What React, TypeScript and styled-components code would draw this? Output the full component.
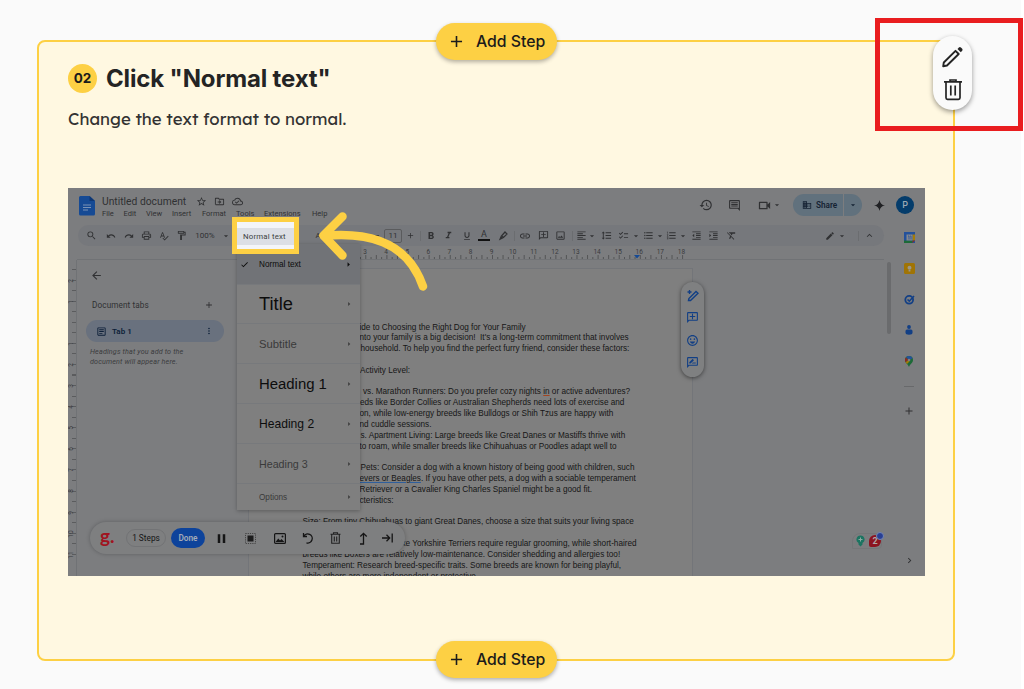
import { ReactNode } from 'react';
import styled, { createGlobalStyle } from 'styled-components';
import {
  MdAdd,
  MdArrowBack,
  MdArrowDropDown,
  MdArrowRight,
  MdCheck,
  MdChecklist,
  MdChevronRight,
  MdDomain,
  MdEdit,
  MdExpandLess,
  MdFormatAlignLeft,
  MdFormatBold,
  MdFormatClear,
  MdFormatIndentDecrease,
  MdFormatIndentIncrease,
  MdFormatItalic,
  MdFormatLineSpacing,
  MdFormatListBulleted,
  MdFormatListNumbered,
  MdFormatUnderlined,
  MdHistory,
  MdLink,
  MdMoreVert,
  MdOutlineAddComment,
  MdOutlineArticle,
  MdOutlineCloudDone,
  MdOutlineComment,
  MdOutlineDriveFileMove,
  MdOutlineEmojiEmotions,
  MdOutlineFormatPaint,
  MdOutlineImage,
  MdOutlinePrint,
  MdOutlineRateReview,
  MdOutlineVideocam,
  MdPause,
  MdPerson,
  MdRedo,
  MdRemove,
  MdSearch,
  MdSpellcheck,
  MdStarBorder,
  MdUndo,
} from 'react-icons/md';

const yellow = '#fdd044';
const ink = '#303133';

const GlobalStyle = createGlobalStyle`
  * {
    box-sizing: border-box;
  }
  body {
    margin: 0;
    background: #fafafa;
    font-family: Inter, 'Liberation Sans', sans-serif;
  }
  svg {
    display: block;
    flex: none;
  }
`;

const Page = styled.main`
  position: relative;
  width: 1024px;
  height: 689px;
  padding: 40px 0 0 37px;
  overflow: hidden;
  background: linear-gradient(to right, #fafafa 1021px, #fff 1021px);
`;

const Card = styled.section`
  position: relative;
  width: 918px;
  height: 621px;
  padding: 20px 29px 0;
  border: 2px solid ${yellow};
  border-radius: 8px;
  background: #fff8e1;
`;

const AddStep = styled.button<{ $bottom?: boolean }>`
  position: absolute;
  left: 397px;
  ${({ $bottom }) => ($bottom ? 'bottom: -19px;' : 'top: -19px;')}
  display: flex;
  align-items: center;
  gap: 10px;
  width: 121px;
  height: 37px;
  padding: 0 0 1px 11px;
  border: 0;
  border-radius: 19px;
  background: ${yellow};
  box-shadow: 0 2px 4px rgba(0, 0, 0, 0.3);
  color: #1b1b1b;
  font: 500 15.8px Inter, sans-serif;
  white-space: nowrap;
`;

const StepHeader = styled.header`
  display: flex;
  align-items: center;
  gap: 9px;
  height: 32px;
`;

const StepNumber = styled.span`
  display: flex;
  align-items: center;
  justify-content: center;
  width: 29px;
  height: 29px;
  border-radius: 50%;
  background: ${yellow};
  color: #1b1b1b;
  font-size: 13.5px;
  font-weight: 700;
`;

const StepTitle = styled.h2`
  margin: 0;
  color: #242424;
  font-size: 24px;
  font-weight: 700;
  letter-spacing: -0.15px;
  white-space: nowrap;
`;

const StepText = styled.p`
  height: 24px;
  margin: 13px 0 57px;
  color: #333;
  font: 400 16.8px/24px Lexend, Lato, sans-serif;
  white-space: nowrap;
`;

const Shot = styled.div`
  position: relative;
  width: 857px;
  height: 388px;
  overflow: hidden;
  background: #7c7d7f;
  color: ${ink};
  font-family: Roboto, sans-serif;
  white-space: nowrap;
`;

const DocHeader = styled.div`
  display: flex;
  height: 37px;
  padding: 7px 11px 0 11px;
`;

const TitleBlock = styled.div`
  flex: 1;
  padding-left: 7px;
`;

const TitleRow = styled.div`
  display: flex;
  align-items: center;
  gap: 7px;
  height: 12px;
  font-size: 10.3px;

  span {
    width: 87px;
  }
`;

const MenuBar = styled.div`
  display: flex;
  height: 13px;
  font-size: 7.5px;
  line-height: 13px;
`;

const MenuName = styled.span<{ $w: number }>`
  width: ${({ $w }) => $w}px;
`;

const HeaderActions = styled.div`
  display: flex;
  align-items: center;
  height: 22px;
  margin-top: -1px;
`;

const Share = styled.div`
  display: flex;
  align-items: center;
  width: 69px;
  height: 22px;
  padding-left: 9px;
  border-radius: 11px;
  background: #61717d;
  color: #152233;
  font-size: 8.2px;
  font-weight: 600;
  gap: 4px;
`;

const ShareArrow = styled.span`
  display: flex;
  align-items: center;
  height: 22px;
  margin-left: auto;
  padding: 0 4px;
  border-left: 1px solid #7c7d7f;
`;

const Avatar = styled.span`
  display: flex;
  align-items: center;
  justify-content: center;
  width: 18px;
  height: 18px;
  border-radius: 50%;
  background: #043c6b;
  color: #9aa7b3;
  font-size: 9px;
  font-weight: 500;
`;

const Columns = styled.div`
  display: flex;
`;

const Main = styled.div`
  width: 816px;
`;

const Toolbar = styled.div`
  display: flex;
  align-items: center;
  height: 21px;
  margin-left: 10px;
  padding: 0 7px 0 3px;
  border-radius: 11px;
  background: #76787c;
`;

const Slot = styled.span<{ $w: number }>`
  display: flex;
  flex: none;
  align-items: center;
  justify-content: center;
  width: ${({ $w }) => $w}px;
  font-size: 8px;
`;

const Divider = styled.i`
  width: 1px;
  height: 10px;
  background: #6b6d70;
`;

const FontSize = styled.span`
  width: 18px;
  height: 14px;
  border: 1px solid #5a5b5d;
  border-radius: 2px;
  line-height: 12px;
  text-align: center;
`;

const TextColor = styled.span`
  width: 12px;
  border-bottom: 2px solid #111;
  font-size: 9px;
  line-height: 9px;
  text-align: center;
`;

const Spacer = styled.span`
  flex: 1;
`;

const Ruler = styled.div`
  display: flex;
  position: relative;
  height: 14px;
  margin-left: 9px;
  padding-left: 277.5px;
  border-bottom: 1px solid #707275;
  color: #3a3b3d;
  font-size: 6.5px;
  line-height: 13px;
`;

const RulerNumber = styled.span`
  flex: none;
  width: 21.1px;
  height: 13px;
  text-align: center;
`;

const RulerTicks = styled.svg`
  position: absolute;
  left: 283px;
  bottom: 0;
`;

const Workspace = styled.div`
  display: flex;
  height: 316px;
`;

const SideRuler = styled.div`
  display: flex;
  flex-direction: column;
  width: 9px;
  padding-top: 17.5px;
  background: repeating-linear-gradient(#5b5c5e 0 1px, transparent 1px 10.55px) right 0 top 9px / 4px 295px no-repeat;
  border-right: 1px solid #707275;
`;

const SideNumber = styled.span`
  display: flex;
  align-items: center;
  justify-content: center;
  width: 6px;
  height: 6px;
  margin-bottom: 15.1px;
  color: #3a3b3d;
  font-size: 6.5px;
  line-height: 6px;
  transform: rotate(-90deg);
`;

const Sidebar = styled.div`
  width: 171px;
  padding: 9px 24px 0 9px;
`;

const SidebarHead = styled.div`
  display: flex;
  align-items: center;
  justify-content: space-between;
  margin: 16px 10px 9px 6px;
  height: 13px;
  font-size: 8.2px;
  letter-spacing: 0.1px;
`;

const TabRow = styled.div`
  display: flex;
  align-items: center;
  gap: 5px;
  height: 22px;
  padding: 0 10px;
  border-radius: 11px;
  background: #69717e;
  color: #0c1f38;
  font-size: 8px;
  font-weight: 600;
`;

const Hint = styled.p`
  margin: 5px 0 0 4px;
  color: #3b3c3e;
  font-size: 7.2px;
  font-style: italic;
  line-height: 9.5px;
  letter-spacing: 0.15px;
`;

const Sheet = styled.div`
  width: 445px;
  height: 308px;
  margin-top: 8px;
  padding: 53.5px 0 0 53.5px;
  overflow: hidden;
  border: 1px solid #737579;
  border-bottom: 0;
  background: #7f7f7f;
`;

const DocLine = styled.div<{ $indent?: number }>`
  height: 10.83px;
  padding-left: ${({ $indent = 0 }) => $indent}px;
  color: #161616;
  font: 8.2px/10.83px 'Liberation Sans', Arial, sans-serif;
  white-space: pre;

  u {
    text-decoration-color: #2f5f9c;
  }
`;

const Typo = styled.u`
  && {
    text-decoration-color: #a3441f;
  }
`;

const Rail = styled.div`
  display: flex;
  flex-direction: column;
  align-items: center;
  width: 41px;
  height: 351px;
  padding: 6px 0 10px 9px;
`;

const RailIcon = styled.span`
  display: flex;
  align-items: center;
  justify-content: center;
  height: 12px;
  margin-bottom: 19.1px;
`;

const RailLine = styled.i`
  width: 10px;
  height: 1px;
  margin-bottom: 18px;
  background: #68696b;
`;

const ScrollThumb = styled.i`
  position: absolute;
  top: 74px;
  left: 819px;
  width: 4px;
  height: 72px;
  border-radius: 2px;
  background: #6a6b6d;
`;

const StyleMenu = styled.div`
  position: absolute;
  top: 56px;
  left: 169px;
  width: 123px;
  height: 266px;
  background: #7f7f7f;
  box-shadow: 0 1px 4px rgba(0, 0, 0, 0.28);
  font-family: 'Liberation Sans', sans-serif;
`;

const StyleItem = styled.div<{ $h: number; $size: number; $soft?: boolean; $active?: boolean }>`
  display: flex;
  align-items: center;
  height: ${({ $h }) => $h}px;
  padding-right: 6px;
  border-bottom: 1px solid #77797c;
  background: ${({ $active }) => ($active ? '#717377' : 'none')};
  color: ${({ $soft }) => ($soft ? '#3a3a3a' : '#0d0d0d')};
  font-size: ${({ $size }) => $size}px;

  &:last-child {
    border-bottom: 0;
  }
`;

const CheckCell = styled.span`
  width: 22px;
  padding-left: 3px;
`;

const Highlight = styled.div`
  position: absolute;
  top: 29px;
  left: 164px;
  width: 67px;
  height: 37px;
  padding: 6px 0 5px;
  border: 5px solid ${yellow};
  background: #f3f5f9;
`;

const HighlightLabel = styled.div`
  height: 17px;
  padding-left: 6px;
  background: #dcdfe5;
  color: #3c3f43;
  font-size: 7.8px;
  line-height: 17px;
  letter-spacing: 0.2px;
`;

const Arrow = styled.svg`
  position: absolute;
  top: 20px;
  left: 244px;
`;

const CommentPill = styled.div`
  position: absolute;
  top: 94px;
  left: 613px;
  display: flex;
  flex-direction: column;
  align-items: center;
  justify-content: space-between;
  width: 23px;
  height: 95px;
  padding: 8px 0;
  border-radius: 12px;
  background: #7f8081;
  box-shadow: 0 1px 4px rgba(0, 0, 0, 0.5);
  color: #123f85;
`;

const FlippedIcon = styled.span`
  transform: scaleX(-1);
`;

const Recorder = styled.div`
  position: absolute;
  top: 334px;
  left: 22px;
  display: flex;
  align-items: center;
  width: 315px;
  height: 32px;
  border-radius: 16px;
  background: #7e7f80;
  box-shadow: 0 0 4px rgba(0, 0, 0, 0.25);
  color: #151515;
`;

const Brand = styled.span`
  width: 36px;
  padding: 0 0 5px 10px;
  color: #a01420;
  font: 700 19px/18px Lato, sans-serif;
`;

const StepCount = styled.span`
  width: 40px;
  height: 18px;
  margin-right: 5px;
  border: 1px solid #727375;
  border-radius: 9px;
  font-size: 8.3px;
  line-height: 16px;
  text-align: center;
`;

const Done = styled.span`
  width: 34px;
  height: 20px;
  margin-right: 2px;
  border-radius: 10px;
  background: #0d439b;
  color: #a3abb8;
  font-size: 8.3px;
  font-weight: 600;
  line-height: 20px;
  text-align: center;
`;

const Assistant = styled.div`
  position: absolute;
  top: 345px;
  left: 784px;
  display: flex;
  align-items: center;
  gap: 4px;
  width: 30px;
  height: 16px;
  padding-left: 3px;
  border: 1px solid #757678;
  border-radius: 8px 8px 4px 1px;
`;

const ErrorCount = styled.span`
  position: relative;
  width: 12px;
  height: 12px;
  border-radius: 6px 6px 6px 2px;
  background: #8c1420;
  color: #b0a8a8;
  font-size: 9px;
  font-weight: 700;
  line-height: 12px;
  text-align: center;

  &::after {
    content: '';
    position: absolute;
    top: -3px;
    right: -3px;
    width: 6px;
    height: 6px;
    border: 1px solid #7587b5;
    border-radius: 50%;
    background: #283f94;
  }
`;

const Marker = styled.div`
  position: absolute;
  top: 18px;
  left: 875px;
  width: 148px;
  height: 113px;
  border: 5px solid #e91d1f;
`;

const StepActions = styled.div`
  position: absolute;
  top: 36px;
  left: 933px;
  display: flex;
  flex-direction: column;
  align-items: center;
  gap: 10px;
  width: 39px;
  height: 74px;
  padding-top: 9px;
  border-radius: 20px;
  background: #fafafa;
  box-shadow: 0 2px 5px rgba(0, 0, 0, 0.4);
`;

const docLines: { indent?: number; text: ReactNode }[] = [
  { indent: 57, text: 'ide to Choosing the Right Dog for Your Family' },
  { indent: 57, text: "nto your family is a big decision!  It's a long-term commitment that involves" },
  { indent: 58, text: 'household. To help you find the perfect furry friend, consider these factors:' },
  { text: '' },
  { indent: 57.5, text: 'Activity Level:' },
  { text: '' },
  {
    indent: 60.5,
    text: (
      <>
        vs. Marathon Runners: Do you prefer cozy nights <Typo>in</Typo> or active adventures?
      </>
    ),
  },
  { indent: 57.5, text: 'eds like Border Collies or Australian Shepherds need lots of exercise and' },
  { indent: 57, text: 'on, while low-energy breeds like Bulldogs or Shih Tzus are happy with' },
  { indent: 57, text: 'nd cuddle sessions.' },
  { indent: 58, text: 's. Apartment Living: Large breeds like Great Danes or Mastiffs thrive with' },
  { indent: 57, text: 'to roam, while smaller breeds like Chihuahuas or Poodles adapt well to' },
  { text: '' },
  { indent: 58, text: 'Pets: Consider a dog with a known history of being good with children, such' },
  {
    indent: 57,
    text: (
      <>
        <u>evers or Beagles</u>. If you have other pets, a dog with a sociable temperament
      </>
    ),
  },
  { indent: 57, text: 'Retriever or a Cavalier King Charles Spaniel might be a good fit.' },
  { indent: 57, text: 'cteristics:' },
  { text: '' },
  { text: 'Size: From tiny Chihuahuas to giant Great Danes, choose a size that suits your living space' },
  { text: '' },
  { indent: 99, text: 'ke Yorkshire Terriers require regular grooming, while short-haired' },
  { text: 'breeds like Boxers are relatively low-maintenance. Consider shedding and allergies too!' },
  { text: 'Temperament: Research breed-specific traits. Some breeds are known for being playful,' },
  { text: 'while others are more independent or protective.' },
];

const styles = [
  { name: 'Title', h: 39, size: 18.3 },
  { name: 'Subtitle', h: 40, size: 11.3, soft: true },
  { name: 'Heading 1', h: 40, size: 14.9 },
  { name: 'Heading 2', h: 40, size: 12.1 },
  { name: 'Heading 3', h: 40, size: 10.7, soft: true },
  { name: 'Options', h: 26, size: 8.2, soft: true },
];

const DropArrow = ({ w = 8 }: { w?: number }) => (
  <Slot $w={w}>
    <MdArrowDropDown size={10} />
  </Slot>
);

const Separator = ({ w }: { w: number }) => (
  <Slot $w={w}>
    <Divider />
  </Slot>
);

const Header = () => (
  <DocHeader>
    <svg width="16" height="21" viewBox="0 0 16 21">
      <path d="M1.5 1h9L16 6v13a1.5 1.5 0 0 1-1.5 1.5h-13A1.5 1.5 0 0 1 0 19V2.500A1.500 1.500 0 0 1 1.500 1Z" fill="#164a94" />
      <path d="M10.500 1 16 6h-5.500Z" fill="#0e3774" />
      <path d="M4 10h8M4 12.500h8M4 15h5" stroke="#7a92b5" strokeWidth="1.200" />
    </svg>
    <TitleBlock>
      <TitleRow>
        <span>Untitled document</span>
        <MdStarBorder size={11} />
        <MdOutlineDriveFileMove size={11} />
        <MdOutlineCloudDone size={11} />
      </TitleRow>
      <MenuBar>
        <MenuName $w={21.5}>File</MenuName>
        <MenuName $w={22.5}>Edit</MenuName>
        <MenuName $w={26}>View</MenuName>
        <MenuName $w={30}>Insert</MenuName>
        <MenuName $w={34}>Format</MenuName>
        <MenuName $w={28}>Tools</MenuName>
        <MenuName $w={48}>Extensions</MenuName>
        <MenuName $w={20}>Help</MenuName>
      </MenuBar>
    </TitleBlock>
    <HeaderActions>
      <Slot $w={28}>
        <MdHistory size={14} />
      </Slot>
      <Slot $w={28}>
        <MdOutlineComment size={13} />
      </Slot>
      <Slot $w={43}>
        <MdOutlineVideocam size={15} />
        <MdArrowDropDown size={10} />
      </Slot>
      <Slot $w={2} />
      <Share>
        <MdDomain size={10} />
        Share
        <ShareArrow>
          <MdArrowDropDown size={10} />
        </ShareArrow>
      </Share>
      <Slot $w={34}>
        <svg width="11" height="11" viewBox="0 0 12 12">
          <path d="M6 0q.8 5.200 6 6q-5.200.8-6 6q-.8-5.200-6-6q5.200-.8 6-6Z" fill="#202124" />
        </svg>
      </Slot>
      <Avatar>P</Avatar>
    </HeaderActions>
  </DocHeader>
);

const FormatBar = () => (
  <Toolbar>
    <Slot $w={20}><MdSearch size={11} /></Slot>
    <Slot $w={19}><MdUndo size={10} /></Slot>
    <Slot $w={17}><MdRedo size={10} /></Slot>
    <Slot $w={18}><MdOutlinePrint size={11} /></Slot>
    <Slot $w={17}><MdSpellcheck size={10} /></Slot>
    <Slot $w={18}><MdOutlineFormatPaint size={11} /></Slot>
    <Slot $w={30}>100%</Slot>
    <DropArrow w={11} />
    <Slot $w={80} />
    <Slot $w={14}>A</Slot>
    <Slot $w={44} />
    <Slot $w={14}><MdRemove size={9} /></Slot>
    <Slot $w={20}><FontSize>11</FontSize></Slot>
    <Slot $w={14}><MdAdd size={9} /></Slot>
    <Separator w={7} />
    <Slot $w={14}><MdFormatBold size={12} /></Slot>
    <Slot $w={20}><MdFormatItalic size={11} /></Slot>
    <Slot $w={17}><MdFormatUnderlined size={10} /></Slot>
    <Slot $w={18}><TextColor>A</TextColor></Slot>
    <Slot $w={19}>
      <svg width="10" height="10" viewBox="0 0 10 10" fill="none" stroke={ink} strokeWidth="1.200">
        <path d="M3.500 5 7 1l2 2-3.500 3.500L3.500 5Z" />
        <path d="m3.300 5.300-1.300 3 3-1.500" fill={ink} />
      </svg>
    </Slot>
    <Separator w={4} />
    <Slot $w={18}><MdLink size={12} /></Slot>
    <Slot $w={18}>
      <FlippedIcon><MdOutlineAddComment size={11} /></FlippedIcon>
    </Slot>
    <Slot $w={17}><MdOutlineImage size={11} /></Slot>
    <Separator w={6} />
    <Slot $w={13}><MdFormatAlignLeft size={11} /></Slot>
    <DropArrow />
    <Slot $w={20}><MdFormatLineSpacing size={11} /></Slot>
    <Slot $w={15}><MdChecklist size={11} /></Slot>
    <DropArrow w={9} />
    <Slot $w={16}><MdFormatListBulleted size={11} /></Slot>
    <DropArrow />
    <Slot $w={15}><MdFormatListNumbered size={11} /></Slot>
    <DropArrow />
    <Slot $w={18}><MdFormatIndentDecrease size={11} /></Slot>
    <Slot $w={17}><MdFormatIndentIncrease size={11} /></Slot>
    <Slot $w={18}><MdFormatClear size={11} /></Slot>
    <Spacer />
    <Slot $w={17}><MdEdit size={10} /></Slot>
    <DropArrow w={7} />
    <Slot $w={10} />
    <Separator w={6} />
    <Slot $w={16}><MdExpandLess size={11} /></Slot>
  </Toolbar>
);

const SideRail = () => (
  <Rail>
    <RailIcon>
      <svg width="11" height="11" viewBox="0 0 11 11">
        <path d="M0 0h11v11H0Z" fill="#23519b" />
        <path d="M8.500 2.500H11v6H8.500Z" fill="#a37b08" />
        <path d="M0 8.500h8.500V11H0Z" fill="#1d6a37" />
        <path d="M8.500 8.500H11L8.500 11Z" fill="#8c2a22" />
        <path d="M2.500 2.500h6v6h-6Z" fill="#85888d" />
        <path d="M4 4h1v3.500M6.200 4H7v3.500" fill="none" stroke="#23519b" strokeWidth=".8" />
      </svg>
    </RailIcon>
    <RailIcon>
      <svg width="11" height="11" viewBox="0 0 11 11">
        <rect width="11" height="11" rx="1.500" fill="#a07405" />
        <circle cx="5.500" cy="4.800" r="2" fill="#9c9788" />
        <path d="M4.600 7h1.800v1.500H4.600Z" fill="#9c9788" />
      </svg>
    </RailIcon>
    <RailIcon>
      <svg width="11" height="11" viewBox="0 0 11 11" fill="none" stroke="#123f85">
        <circle cx="5.200" cy="5.800" r="3.900" strokeWidth="1.800" />
        <path d="m3.500 5.500 1.800 1.700L10 2" strokeWidth="1.600" />
      </svg>
    </RailIcon>
    <RailIcon>
      <svg width="8" height="10" viewBox="0 0 8 10" fill="#123f85">
        <circle cx="4" cy="2" r="1.900" />
        <path d="M.5 6Q.5 4.500 2 4.500h4Q7.500 4.500 7.500 6v1.500Q7.500 9.700 4 9.700T.5 7.500Z" />
      </svg>
    </RailIcon>
    <RailIcon>
      <svg width="8" height="11" viewBox="0 0 8 11">
        <path d="M4 0a4 4 0 0 1 4 4c0 3-3 4-4 7C3 8 0 7 0 4a4 4 0 0 1 4-4Z" fill="#1d6a37" />
        <path d="M4 0a4 4 0 0 1 3.600 2.200L4.500 4 1 1.400A4 4 0 0 1 4 0Z" fill="#23519b" />
        <path d="M1 1.400 3.500 4 .6 6.200A4 4 0 0 1 1 1.400Z" fill="#8c2a22" />
        <path d="M.6 6.200 3.500 4l1 1.500L2 8Z" fill="#a37b08" />
        <circle cx="4" cy="4" r="1.300" fill="#7c7d7f" />
      </svg>
    </RailIcon>
    <RailLine />
    <RailIcon>
      <MdAdd size={12} />
    </RailIcon>
    <Spacer />
    <MdChevronRight size={11} />
  </Rail>
);

const TextStyleMenu = () => (
  <StyleMenu>
    <StyleItem $h={41} $size={8.2} $active>
      <CheckCell>
        <MdCheck size={9} />
      </CheckCell>
      Normal text
      <Spacer />
      <MdArrowRight size={11} />
    </StyleItem>
    {styles.map(({ name, h, size, soft }) => (
      <StyleItem key={name} $h={h} $size={size} $soft={soft}>
        <CheckCell />
        {name}
        <Spacer />
        <MdArrowRight size={10} color="#3c3c3c" />
      </StyleItem>
    ))}
  </StyleMenu>
);

const RecorderBar = () => (
  <Recorder>
    <Brand>g.</Brand>
    <StepCount>1 Steps</StepCount>
    <Done>Done</Done>
    <Slot $w={29}><MdPause size={15} /></Slot>
    <Slot $w={29}>
      <svg width="11" height="11" viewBox="0 0 11 11">
        <rect x=".5" y=".5" width="10" height="10" fill="none" stroke="#444" strokeDasharray="1.200 1" />
        <rect x="2.500" y="2.500" width="6" height="6" fill="#1c1c1c" />
      </svg>
    </Slot>
    <Slot $w={29}>
      <svg width="12" height="11" viewBox="0 0 12 11">
        <rect x=".6" y=".6" width="10.800" height="9.800" rx="1" fill="none" stroke="#151515" strokeWidth="1.200" />
        <path d="m1.500 9 2.800-3.500 1.700 2 1.500-1.500L10.500 9Z" fill="#151515" />
        <circle cx="8.500" cy="3.500" r="1" fill="#151515" />
      </svg>
    </Slot>
    <Slot $w={27}>
      <svg width="12" height="12" viewBox="0 0 12 12" fill="none" stroke="#151515" strokeWidth="1.300">
        <path d="M1.500 1v3.500H5M1.800 4.300A4.500 4.500 0 1 1 4.500 10.800" />
      </svg>
    </Slot>
    <Slot $w={28}>
      <svg width="11" height="12" viewBox="0 0 11 12" fill="none" stroke="#222" strokeWidth="1.100">
        <path d="M.5 2.200h10M3.500 2V.7h4V2M1.700 2.500v8.800h7.600V2.500M4.300 4.500v5M6.700 4.500v5" />
      </svg>
    </Slot>
    <Slot $w={27}>
      <svg width="10" height="13" viewBox="0 0 10 13" fill="none" stroke="#151515" strokeWidth="1.300">
        <path d="M2 12h3.500V1.500M2.300 4.500l3.200-3.200 3.200 3.200" />
      </svg>
    </Slot>
    <Slot $w={22}>
      <svg width="11" height="10" viewBox="0 0 11 10" fill="none" stroke="#151515" strokeWidth="1.300">
        <path d="M0 5h7.500M4.500 1.800 7.700 5 4.500 8.200M10.200.5v9" />
      </svg>
    </Slot>
  </Recorder>
);

const DocsScreen = () => (
  <Shot>
    <Header />
    <Columns>
      <Main>
        <FormatBar />
        <Ruler>
          {Array.from({ length: 16 }, (_, i) => (
            <RulerNumber key={i}>{i + 3}</RulerNumber>
          ))}
          <RulerTicks width="330" height="4">
            {Array.from({ length: 62 }, (_, i) => (
              <path key={i} d={`M${i * 5.28 + 0.5} ${i % 2 ? 0 : 2}V4`} stroke="#4a4b4d" strokeWidth=".8" />
            ))}
            <path d="M274 0h6l-3 3.500Z" fill="#164a94" />
          </RulerTicks>
        </Ruler>
        <Workspace>
          <SideRuler>
            {['2', '1', '', '1', '2', '3', '4', '5', '6', '7', '8', '9', '10', '11'].map((n, i) => (
              <SideNumber key={i}>{n}</SideNumber>
            ))}
          </SideRuler>
          <Sidebar>
            <Slot $w={20}>
              <MdArrowBack size={13} />
            </Slot>
            <SidebarHead>
              Document tabs
              <MdAdd size={10} />
            </SidebarHead>
            <TabRow>
              <MdOutlineArticle size={11} />
              Tab 1
              <Spacer />
              <MdMoreVert size={10} />
            </TabRow>
            <Hint>
              Headings that you add to the
              <br />
              document will appear here.
            </Hint>
          </Sidebar>
          <Sheet>
            {docLines.map(({ indent, text }, i) => (
              <DocLine key={i} $indent={indent}>
                {text}
              </DocLine>
            ))}
          </Sheet>
        </Workspace>
      </Main>
      <SideRail />
    </Columns>
    <ScrollThumb />
    <TextStyleMenu />
    <CommentPill>
      <svg width="12" height="12" viewBox="0 0 12 12" fill="none" stroke="currentColor">
        <path d="m1.500 10.500.4-2L9 1.500 11 3.300 3.500 10.500Z" strokeWidth="1.400" />
        <path d="M2.500 0v4M.5 2h4" strokeWidth="1.300" />
      </svg>
      <FlippedIcon><MdOutlineAddComment size={13} /></FlippedIcon>
      <MdOutlineEmojiEmotions size={13} />
      <MdOutlineRateReview size={13} />
    </CommentPill>
    <RecorderBar />
    <Assistant>
      <svg width="9" height="12" viewBox="0 0 9 12">
        <path d="M4.500.5a4 4 0 0 1 2 7.500v1.500l-2 2-2-2V8a4 4 0 0 1 2-7.500Z" fill="#1c7461" />
        <path d="M4.500 2.500v4M2.500 4.500h4" stroke="#8da9a2" />
      </svg>
      <ErrorCount>2</ErrorCount>
    </Assistant>
    <Highlight>
      <HighlightLabel>Normal text</HighlightLabel>
    </Highlight>
    <Arrow width="125" height="95" viewBox="312 208 125 95" fill="none" stroke={yellow} strokeWidth="8.500" strokeLinecap="round" strokeLinejoin="round">
      <path d="M342.500 216.500 323.500 235.500 342.500 255.500" />
      <path d="M324 235.800C366 232 407 240 423 286.500" />
    </Arrow>
  </Shot>
);

const App = () => {
  return (
    <>
      <GlobalStyle />
      <Page>
        <Card>
          <AddStep>
            <MdAdd size={19} />
            Add Step
          </AddStep>
          <StepHeader>
            <StepNumber>02</StepNumber>
            <StepTitle>Click "Normal text"</StepTitle>
          </StepHeader>
          <StepText>Change the text format to normal.</StepText>
          <DocsScreen />
          <AddStep $bottom>
            <MdAdd size={19} />
            Add Step
          </AddStep>
        </Card>
        <StepActions>
          <svg width="24" height="24" viewBox="0 0 24 24" fill="none" stroke="#242424" strokeWidth="1.900" strokeLinejoin="round">
            <path d="M2.200 21.300 2.800 17.500 14.500 5.800 17.700 9 6 20.500Z" />
            <path d="m16.500 3.900 1.400-1.400q1-.8 2 0l1.300 1.300q.8 1 0 2l-1.400 1.400Z" fill="#242424" stroke="none" />
          </svg>
          <svg width="18" height="22" viewBox="0 0 18 22" fill="none" stroke="#242424" strokeWidth="1.700">
            <path d="M0 2.800h18M6 2.300V1h6v1.300M2 3.500V18.800q0 1.500 1.500 1.500h11q1.500 0 1.500-1.500V3.500M6.800 6.500v10M11.200 6.500v10" />
          </svg>
        </StepActions>
        <Marker />
      </Page>
    </>
  );
};

export default App;
